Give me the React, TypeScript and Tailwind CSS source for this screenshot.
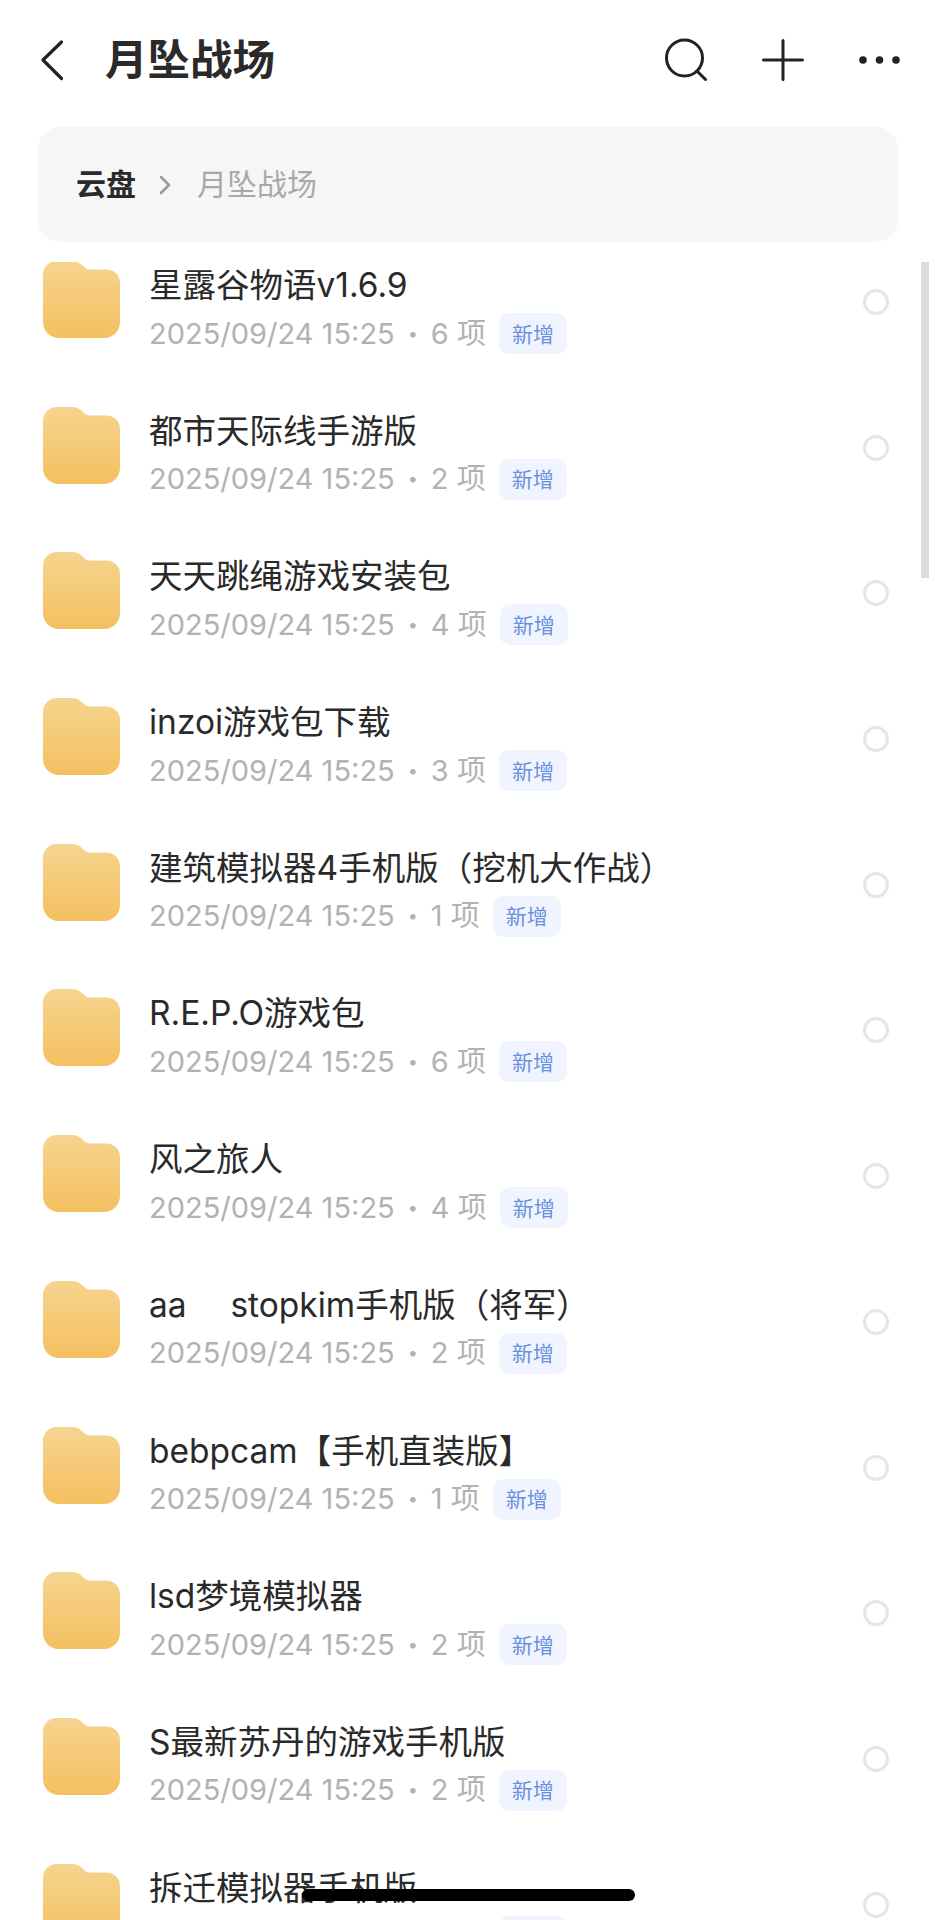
import React from 'react'

const rows = [
  { name: '星露谷物语v1.6.9', count: 6 },
  { name: '都市天际线手游版', count: 2 },
  { name: '天天跳绳游戏安装包', count: 4 },
  { name: 'inzoi游戏包下载', count: 3 },
  { name: '建筑模拟器4手机版（挖机大作战）', count: 1 },
  { name: 'R.E.P.O游戏包', count: 6 },
  { name: '风之旅人', count: 4 },
  { name: 'aa\u00a0\u00a0\u00a0\u00a0\u2009stopkim手机版（将军）', count: 2 },
  { name: 'bebpcam【手机直装版】', count: 1 },
  { name: 'lsd梦境模拟器', count: 2 },
  { name: 'S最新苏丹的游戏手机版', count: 2 },
  { name: '拆迁模拟器手机版', count: 2 },
]

function Folder() {
  return (
    <svg width="77" height="77" viewBox="0 0 77 77" className="shrink-0 -mt-[1px]">
      <defs>
        <linearGradient id="folderFill" x1="0" y1="0" x2="0" y2="1">
          <stop offset="0%" stopColor="#f6d48f" />
          <stop offset="100%" stopColor="#f4c060" />
        </linearGradient>
      </defs>
      <path
        d="M0 14C0 6 6 0 14 0H28C34 0 37 2 40 5C43 8 45 8.500 49 8.500H63C71 8.500 77 14 77 22V61C77 70 70 77 61 77H16C7 77 0 70 0 61Z"
        fill="url(#folderFill)"
      />
    </svg>
  )
}

function Row({ name, count }: { name: string; count: number }) {
  return (
    <div className="flex h-[145.700px] shrink-0 pl-[43px] pr-[47px]">
      <Folder />
      <div className="ml-[29px] flex-1 min-w-0">
        <div className="text-[33.500px] leading-[46px] text-[#2a2a2a] whitespace-nowrap">{name}</div>
        <div className="mt-[5px] flex items-center text-[#b2b2b2] text-[29px] leading-[40px]">
          <span className="whitespace-nowrap">2025/09/24 15:25</span>
          <span className="mx-[13px] text-[18px]">•</span>
          <span className="whitespace-nowrap">{count} 项</span>
          <span className="ml-[13px] flex h-[41px] w-[68px] items-center justify-center rounded-[10px] bg-[#f0f4fe] pt-[2px] text-[21px] text-[#6790e0]">
            新增
          </span>
        </div>
      </div>
      <div className="mt-[27px] h-[26px] w-[26px] shrink-0 rounded-full border-[3px] border-[#e6e6e6]" />
    </div>
  )
}

export default function App() {
  return (
    <div
      className="relative flex h-[1920px] w-[936px] flex-col overflow-hidden bg-white"
      style={{ fontFamily: 'Inter, "Noto Sans CJK SC", sans-serif' }}
    >
      {/* Header */}
      <div className="flex h-[127px] shrink-0 items-start pl-[41px] pr-[36px] pt-[38px]">
        <svg width="22" height="42" viewBox="0 0 22 42" fill="none" className="shrink-0 mt-[1px]">
          <path d="M20.500 3L2 21L20.500 39.500" stroke="#222222" strokeWidth="3.200" strokeLinecap="round" strokeLinejoin="round" />
        </svg>
        <div className="ml-[42px] text-[42.500px] font-bold leading-[44px] text-[#2a2a2a]">月坠战场</div>
        <div className="ml-auto flex items-center">
          <svg width="42" height="43" viewBox="0 0 42 43" fill="none">
            <circle cx="19.500" cy="20" r="18" stroke="#222222" strokeWidth="3" />
            <path d="M32 33L40.500 41.500" stroke="#222222" strokeWidth="3" strokeLinecap="round" />
          </svg>
          <svg width="42" height="42" viewBox="0 0 42 42" fill="none" className="ml-[55px]">
            <path d="M21 1.500V40.500M1.500 21H40.500" stroke="#222222" strokeWidth="3" strokeLinecap="round" />
          </svg>
          <svg width="41" height="8" viewBox="0 0 41 8" className="ml-[55px]">
            <circle cx="4" cy="4" r="3.800" fill="#222222" />
            <circle cx="20.500" cy="4" r="3.800" fill="#222222" />
            <circle cx="37" cy="4" r="3.800" fill="#222222" />
          </svg>
        </div>
      </div>

      {/* Breadcrumb */}
      <div className="mx-[38px] flex h-[115px] shrink-0 items-center rounded-[22px] bg-[#f6f6f7] pl-[38px] pr-[36px] text-[30px]">
        <span className="font-bold text-[#2a2a2a]">云盘</span>
        <svg width="12" height="20" viewBox="0 0 12 20" fill="none" className="ml-[23px]">
          <path d="M2 2L10 10L2 18" stroke="#9a9a9a" strokeWidth="2.500" strokeLinecap="round" strokeLinejoin="round" />
        </svg>
        <span className="ml-[26px] text-[#a8a8a8]">月坠战场</span>
      </div>

      {/* List */}
      <div className="mt-[20px] flex flex-1 flex-col overflow-hidden">
        {rows.map((r, i) => (
          <Row key={i} name={r.name} count={r.count} />
        ))}
      </div>

      {/* Scrollbar */}
      <div className="absolute left-[921px] top-[262px] h-[316px] w-[8px] bg-[#dddddd]" />
      {/* Home indicator */}
      <div className="absolute left-[302px] top-[1889px] h-[12px] w-[333px] rounded-full bg-black" />
    </div>
  )
}
